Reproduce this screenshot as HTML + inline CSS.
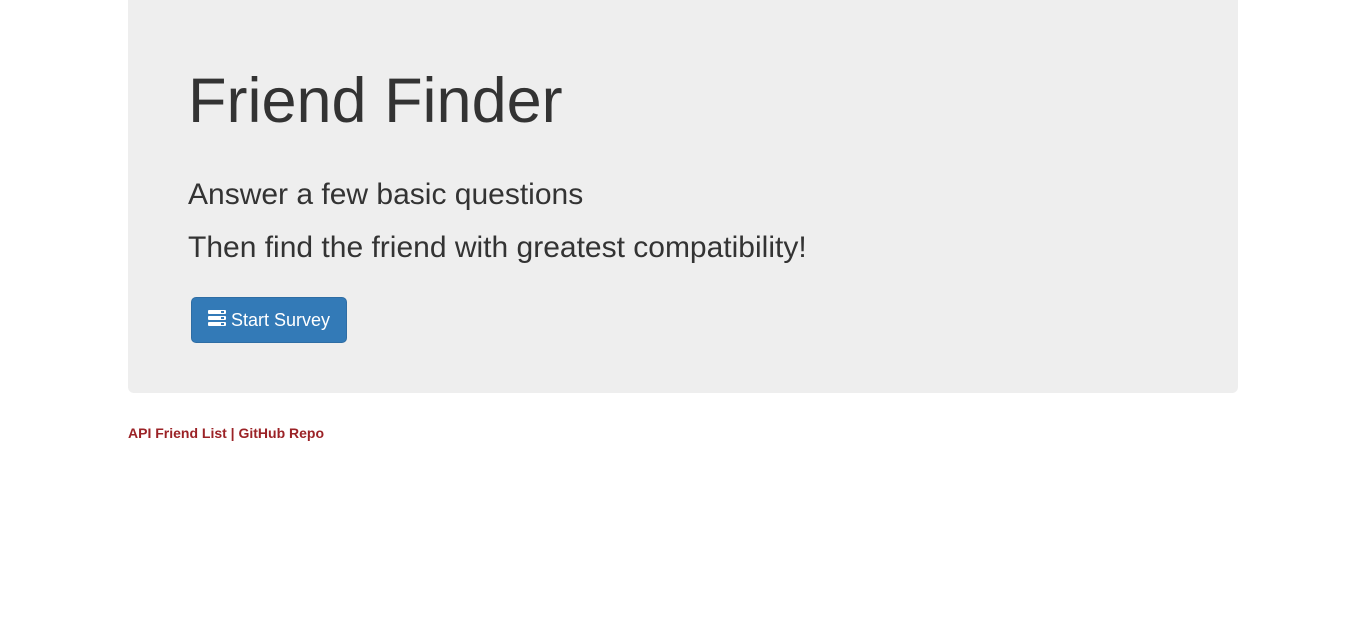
<!DOCTYPE html>
<html><head><style>
body{margin:0;background:#fff;font-family:"Liberation Sans",sans-serif;color:#333}
.j{position:absolute;left:128px;top:0;width:1110px;height:393px;background:#eee;border-radius:0 0 6px 6px}
h1{position:absolute;left:60px;top:70px;margin:0;font-size:63px;font-weight:400;line-height:1}
.p{position:absolute;left:60px;font-size:30px;line-height:1;margin:0}
.b{position:absolute;left:63px;top:297px;width:154px;height:44px;background:#337ab7;border:1px solid #2e6da4;border-radius:5px;color:#fff;font-size:18px;box-sizing:content-box}
.b span{position:absolute;left:39px;top:12px}
.ic{position:absolute;left:16px;top:12px;width:18px}
.ic i{display:block;height:4px;background:#fff;border-radius:1px;margin-bottom:2px;position:relative}
.ic i:after{content:"";position:absolute;right:2px;top:1px;width:3px;height:2px;background:#337ab7}
.f{position:absolute;left:128px;top:425px;font-size:14px;font-weight:bold;color:#9b2226}
</style></head><body>
<div class="j">
<h1>Friend Finder</h1>
<p class="p" style="top:180px">Answer a few basic questions</p>
<p class="p" style="top:233px">Then find the friend with greatest compatibility!</p>
<div class="b"><div class="ic"><i></i><i></i><i></i></div><span>Start Survey</span></div>
</div>
<div class="f">API Friend List | GitHub Repo</div>
</body></html>
